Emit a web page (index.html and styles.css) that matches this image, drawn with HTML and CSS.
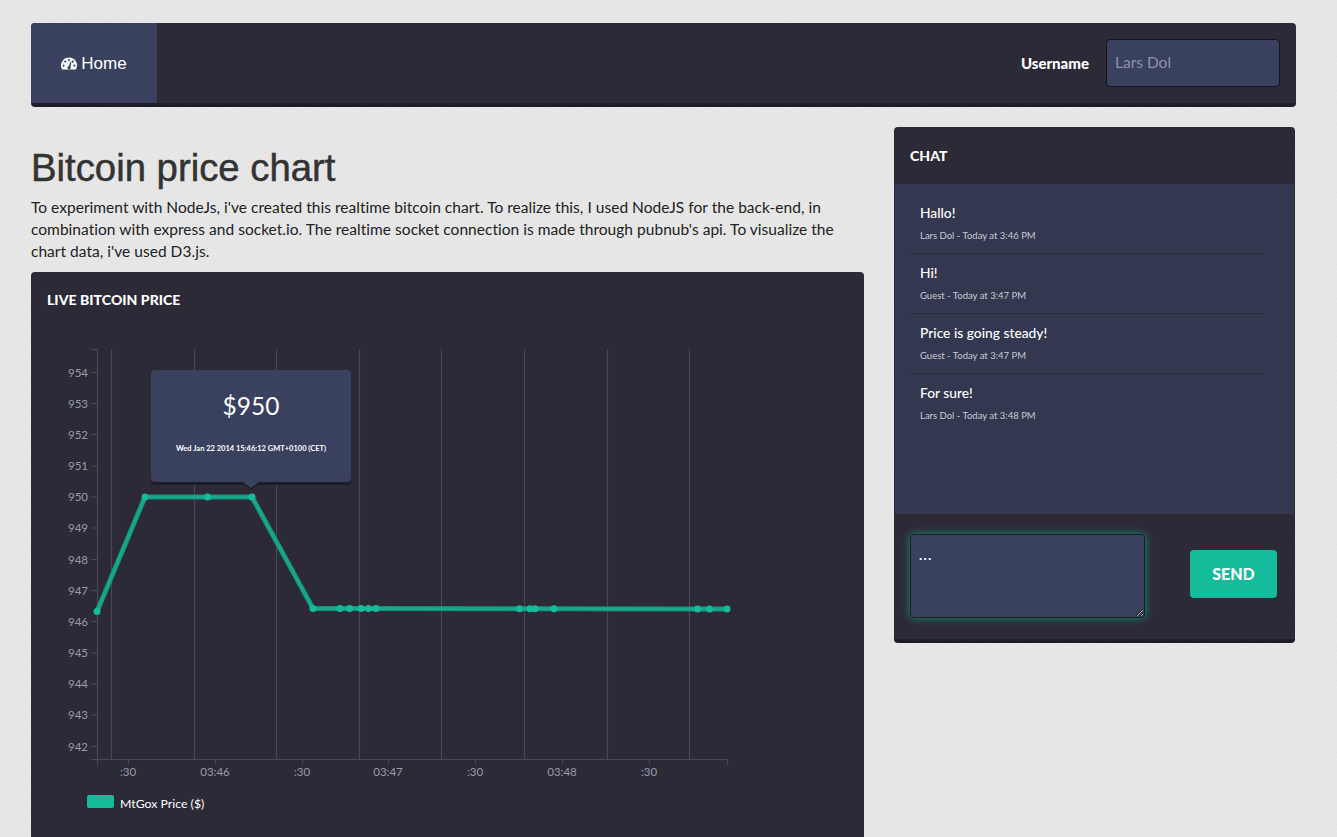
FILE: index.html
```html
<!DOCTYPE html>
<html lang="en">

<head>
    <meta charset="UTF-8">
    <title>Bitcoin price chart</title>
    <link rel="stylesheet" href="styles.css">
</head>

<body>
    <nav class="navbar">
        <a class="nav-home" href="#">
            <svg class="nav-icon" viewBox="0 0 16 13" width="16" height="13">
                <path fill="#fff" d="M8 0.5C3.6 0.5 0 4 0 8.4c0 1.6.4 3 1.2 4.1h13.6C15.6 11.4 16 10 16 8.4 16 4 12.4.5 8 .5z" />
                <g fill="#39415f">
                    <circle cx="2.6" cy="8.6" r="1.1" />
                    <circle cx="4.2" cy="4.6" r="1.1" />
                    <circle cx="8" cy="3" r="1.1" />
                    <circle cx="13.4" cy="8.6" r="1.1" />
                    <circle cx="11.8" cy="4.6" r="1.1" />
                    <path d="M9.6 4.4l.9.3-1.1 5a1.6 1.6 0 1 1-1.8-.5z" />
                </g>
            </svg>
            <span>Home</span>
        </a>
        <form class="nav-user">
            <label class="nav-label" for="username">Username</label>
            <input class="nav-input" id="username" type="text" placeholder="Lars Dol">
        </form>
    </nav>

    <div class="columns">
        <main>
            <h1 class="title">Bitcoin price chart</h1>
            <p class="intro">To experiment with NodeJs, i've created this realtime bitcoin chart. To realize this, I used NodeJS for the back-end, in combination with express and socket.io. The realtime socket connection is made through pubnub's api. To visualize the chart data, i've used D3.js.</p>

            <section class="chart-panel">
                <h2 class="panel-title">LIVE BITCOIN PRICE</h2>
                <div class="chart">
                    <svg class="chart-svg" viewBox="0 0 833 520" width="833" height="520">
                        <g class="grid">
                            <line x1="80.5" y1="21" x2="80.5" y2="431" />
                            <line x1="163.5" y1="21" x2="163.5" y2="431" />
                            <line x1="245.5" y1="21" x2="245.5" y2="431" />
                            <line x1="328.5" y1="21" x2="328.5" y2="431" />
                            <line x1="410.5" y1="21" x2="410.5" y2="431" />
                            <line x1="493.5" y1="21" x2="493.5" y2="431" />
                            <line x1="576.5" y1="21" x2="576.5" y2="431" />
                            <line x1="658.5" y1="21" x2="658.5" y2="431" />
                        </g>
                        <path class="axis" d="M60 21.5h6.5V431.5M60 431.5H696.5V437M66.5 431.5V437M97.5 431.5V436M184.5 431.5V436M271.5 431.5V436M357.5 431.5V436M444.5 431.5V436M531.5 431.5V436M618.5 431.5V436" />
                        <path class="axis" d="M60 44.5h6M60 75.5h6M60 106.5h6M60 138h6M60 169h6M60 200h6M60 231.5h6M60 262.5h6M60 293.5h6M60 325h6M60 356h6M60 387h6M60 418.5h6" />

                        <g class="tick-y">
                            <text x="57" y="48.5">954</text>
                            <text x="57" y="79.5">953</text>
                            <text x="57" y="110.5">952</text>
                            <text x="57" y="142">951</text>
                            <text x="57" y="173">950</text>
                            <text x="57" y="204">949</text>
                            <text x="57" y="235.5">948</text>
                            <text x="57" y="266.5">947</text>
                            <text x="57" y="297.5">946</text>
                            <text x="57" y="329">945</text>
                            <text x="57" y="360">944</text>
                            <text x="57" y="391">943</text>
                            <text x="57" y="422.5">942</text>
                        </g>
                        <g class="tick-x">
                            <text x="97" y="448">:30</text>
                            <text x="184" y="448">03:46</text>
                            <text x="271" y="448">:30</text>
                            <text x="357" y="448">03:47</text>
                            <text x="444" y="448">:30</text>
                            <text x="531" y="448">03:48</text>
                            <text x="618" y="448">:30</text>
                        </g>

                        <polyline class="price-line" points="66,283.5 114,169 176.5,169 221,169 282,280.5 345,280.5 488.5,280.7 523,280.8 666.5,281 696,281" />
                        <polyline class="price-line-core" points="66,283.5 114,169 176.5,169 221,169 282,280.5 345,280.5 488.5,280.7 523,280.8 666.5,281 696,281" />
                        <g class="price-dots">
                            <circle cx="66" cy="283.5" r="3.5" />
                            <circle cx="114" cy="169" r="3.5" />
                            <circle cx="176.5" cy="169" r="3.5" />
                            <circle cx="221" cy="169" r="3.5" />
                            <circle cx="282" cy="280.5" r="3.5" />
                            <circle cx="309" cy="280.5" r="3.5" />
                            <circle cx="318.5" cy="280.5" r="3.5" />
                            <circle cx="330" cy="280.5" r="3.5" />
                            <circle cx="337.5" cy="280.5" r="3.5" />
                            <circle cx="345" cy="280.5" r="3.5" />
                            <circle cx="488.5" cy="280.7" r="3.5" />
                            <circle cx="499" cy="280.8" r="3.5" />
                            <circle cx="504" cy="280.8" r="3.5" />
                            <circle cx="523" cy="280.8" r="3.5" />
                            <circle cx="666.5" cy="281" r="3.5" />
                            <circle cx="678.5" cy="281" r="3.5" />
                            <circle cx="696" cy="281" r="3.5" />
                        </g>

                        <rect class="legend-swatch" x="56" y="467" width="27" height="13" rx="2" />
                        <text class="legend-text" x="89" y="480">MtGox Price ($)</text>
                    </svg>

                    <div class="tooltip">
                        <div class="tooltip-price">$950</div>
                        <div class="tooltip-date">Wed Jan 22 2014 15:46:12 GMT+0100 (CET)</div>
                    </div>
                </div>
            </section>
        </main>

        <aside class="chat">
            <h2 class="panel-title chat-title">CHAT</h2>
            <ul class="messages">
                <li class="message">
                    <div class="message-text">Hallo!</div>
                    <div class="message-meta">Lars Dol - Today at 3:46 PM</div>
                </li>
                <li class="message">
                    <div class="message-text">Hi!</div>
                    <div class="message-meta">Guest - Today at 3:47 PM</div>
                </li>
                <li class="message">
                    <div class="message-text">Price is going steady!</div>
                    <div class="message-meta">Guest - Today at 3:47 PM</div>
                </li>
                <li class="message">
                    <div class="message-text">For sure!</div>
                    <div class="message-meta">Lars Dol - Today at 3:48 PM</div>
                </li>
            </ul>
            <form class="chat-form">
                <textarea class="chat-input">...</textarea>
                <button class="chat-send" type="button">SEND</button>
            </form>
        </aside>
    </div>
</body>

</html>
```

FILE: styles.css
```css
html,
body {
    height: 100%;
    overflow: hidden;
}

body {
    margin: 0;
    padding: 23px 41px 0 31px;
    box-sizing: border-box;
    background-color: #e6e6e6;
    background-image:
        repeating-linear-gradient(45deg, rgba(255, 255, 255, 0.1) 0 1px, transparent 1px 3px),
        repeating-linear-gradient(-45deg, rgba(0, 0, 0, 0.012) 0 1px, transparent 1px 3px);
    color: #222;
    font-family: Lato, "Noto Sans", sans-serif;
}

/* navbar */
.navbar {
    display: flex;
    justify-content: space-between;
    align-items: stretch;
    height: 84px;
    box-sizing: border-box;
    background-color: #2c2a36;
    border-bottom: 4px solid #1e1c28;
    border-radius: 4px;
    overflow: hidden;
}

.nav-home {
    display: flex;
    align-items: center;
    justify-content: center;
    gap: 4px;
    width: 126px;
    padding-top: 1px;
    box-sizing: border-box;
    background-color: #39415f;
    color: white;
    font-family: "Liberation Sans", Arial, sans-serif;
    font-size: 17px;
    text-decoration: none;
}

.nav-user {
    display: flex;
    align-items: center;
    gap: 17px;
    padding-right: 16px;
}

.nav-label {
    color: white;
    font-size: 15px;
    font-weight: 900;
}

.nav-input {
    width: 174px;
    height: 48px;
    box-sizing: border-box;
    padding: 0 8px 2px;
    background-color: #39415f;
    border: 1px solid #15141d;
    border-radius: 4px;
    color: white;
    font-family: inherit;
    font-size: 15.5px;
}

.nav-input::placeholder {
    color: #8f93a9;
    opacity: 1;
}

/* page columns */
.columns {
    display: grid;
    grid-template-columns: 833px 401px;
    column-gap: 30px;
    margin-top: 20px;
}

.title {
    margin: 20px 0 7px;
    color: #333;
    font-family: "Liberation Sans", Arial, sans-serif;
    font-size: 38.3px;
    font-weight: 500;
    line-height: 42px;
    -webkit-text-stroke: 0.5px #333;
}

.intro {
    margin: 0 0 10px;
    font-size: 15.5px;
    letter-spacing: 0.03px;
    line-height: 22px;
}

/* panels */
.panel-title {
    margin: 0;
    color: white;
    font-size: 14px;
    font-weight: 900;
    letter-spacing: 0.05px;
    line-height: 20px;
}

.chart-panel {
    height: 600px;
    padding-top: 18px;
    box-sizing: border-box;
    background-color: #2c2a36;
    border-radius: 4px;
}

.chart-panel .panel-title {
    padding-left: 16px;
    margin-bottom: 18px;
}

.chart {
    position: relative;
}

.chart-svg {
    display: block;
}

.grid line {
    stroke: #4a4855;
    stroke-width: 1.2;
}

.axis {
    fill: none;
    stroke: #4a4855;
    stroke-width: 1.2;
}

.tick-y text,
.tick-x text {
    fill: #9a9aac;
    font-size: 11.5px;
}

.tick-y text {
    text-anchor: end;
}

.tick-x text {
    text-anchor: middle;
}

.price-line {
    fill: none;
    stroke: #188f79;
    stroke-width: 5;
}

.price-line-core {
    fill: none;
    stroke: #17a88b;
    stroke-width: 3;
}

.price-dots circle {
    fill: #14bc9c;
}

.legend-swatch {
    fill: #14bc9c;
}

.legend-text {
    fill: white;
    font-size: 12.3px;
}

.tooltip {
    position: absolute;
    left: 120px;
    top: 42px;
    width: 200px;
    height: 112px;
    box-sizing: border-box;
    padding-top: 18px;
    background-color: #39415f;
    border-radius: 4px;
    box-shadow: 0 3px 0 #1e1c28;
    color: white;
    text-align: center;
}

.tooltip::before {
    content: "";
    position: absolute;
    left: 91px;
    top: 100%;
    border-left: 9px solid transparent;
    border-right: 9px solid transparent;
    border-top: 9px solid #1e1c28;
}

.tooltip::after {
    content: "";
    position: absolute;
    left: 92px;
    top: 100%;
    border-left: 8px solid transparent;
    border-right: 8px solid transparent;
    border-top: 6px solid #39415f;
}

.tooltip-price {
    font-size: 24.5px;
    line-height: 36px;
}

.tooltip-date {
    margin-top: 19px;
    font-size: 7.5px;
    font-weight: 700;
    line-height: 12px;
}

/* chat */
.chat {
    height: 516px;
    display: flex;
    flex-direction: column;
    background-color: #2c2a36;
    border-bottom: 4px solid #1e1c28;
    border-radius: 4px;
    box-sizing: border-box;
    overflow: hidden;
}

.chat-title {
    height: 57px;
    padding: 19px 16px 0;
    box-sizing: border-box;
}

.messages {
    height: 330px;
    margin: 0;
    padding: 10px 15px 0;
    box-sizing: border-box;
    list-style: none;
    background-color: #333850;
    border-left: 1px solid #2c2a36;
    border-right: 1px solid #2c2a36;
}

.message {
    width: 353px;
    height: 60px;
    box-sizing: border-box;
    padding: 9px 10px 0;
    border-bottom: 1px solid #2b2a39;
}

.message:last-child {
    border-bottom: none;
}

.message-text {
    color: white;
    font-size: 13.8px;
    font-weight: 500;
    line-height: 20px;
}

.message-meta {
    margin-top: 6px;
    color: #c9cbd4;
    font-size: 9.5px;
    line-height: 14px;
}

.chat-form {
    flex: 1;
    display: flex;
    align-items: flex-start;
    justify-content: space-between;
    padding: 20px 18px 0 16px;
}

.chat-input {
    width: 235px;
    height: 84px;
    box-sizing: border-box;
    padding: 11px 8px 8px;
    margin: 0;
    background-color: #39415f;
    border: 1px solid #15201f;
    border-radius: 4px;
    box-shadow: 0 0 8px rgba(20, 188, 156, 0.7);
    color: white;
    font-family: inherit;
    font-size: 14px;
    font-weight: 700;
    letter-spacing: 1.2px;
    outline: none;
}

.chat-send {
    width: 87px;
    height: 48px;
    padding: 0 0 2px;
    margin-top: 16px;
    background-color: #14bc9c;
    border: none;
    border-radius: 4px;
    color: white;
    font-family: inherit;
    font-size: 16px;
    font-weight: 900;
}
```
